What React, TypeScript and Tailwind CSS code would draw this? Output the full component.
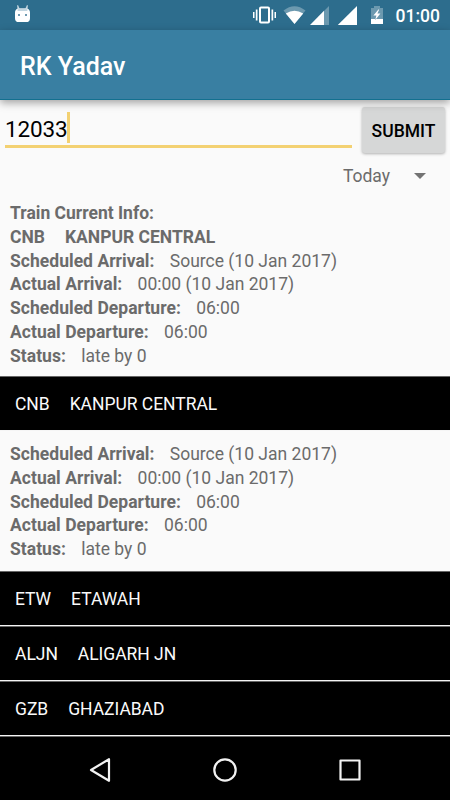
import React from "react";

type Detail = {
  label: string;
  value: string;
};

const details: Detail[] = [
  { label: "Scheduled Arrival:", value: "Source (10 Jan 2017)" },
  { label: "Actual Arrival:", value: "00:00 (10 Jan 2017)" },
  { label: "Scheduled Departure:", value: "06:00" },
  { label: "Actual Departure:", value: "06:00" },
  { label: "Status:", value: "late by 0" },
];

const stations = [
  { code: "ETW", name: "ETAWAH" },
  { code: "ALJN", name: "ALIGARH JN" },
  { code: "GZB", name: "GHAZIABAD" },
];

const StatusBar = () => (
  <div className="relative h-[30px] shrink-0 bg-[#2d6d8d] text-white">
    <svg width="450" height="30" viewBox="0 0 450 30" fill="white">
      {/* Cat head */}
      <path d="M18 5l1.6 3.4h5.8L27 5l.9.4-.5 4H17.6l-.5-4z" fill="#c3d6e0" />
      <path d="M17.5 8.8h10c1.6.5 2.5 2 2.5 4v5.4c0 2.6-1.4 3.9-4 3.9h-7c-2.6 0-4-1.3-4-3.9v-5.4c0-2 .9-3.5 2.5-4z" />
      <path d="M17.6 8.6h9.8v2.4h-9.8z" fill="#c3d6e0" />
      <path d="M18 14h2v2h-2zM25 14h2v2h-2z" fill="#6f9ab1" />
      {/* Vibrate */}
      <rect x="260" y="7.5" width="9" height="15" rx="1" fill="none" stroke="white" strokeWidth="2" />
      <path d="M255.8 9.5h1.7v11h-1.7zM253 12h1.5v6H253zM271.5 9.5h1.7v11h-1.7zM274.5 12h1.5v6h-1.5z" />
      {/* Wifi */}
      <path d="M283.5 10.5Q294.5 2 305.5 10.5L294.5 24z" opacity="0.3" />
      <path d="M285.8 13.4Q294.5 8.2 303.2 13.4L294.5 24z" />
      {/* Signals */}
      <path d="M329 6v19h-5V11z" opacity="0.3" />
      <path d="M324 10.8v14.2h-14z" />
      <path d="M357 6v19h-19.2z" />
      {/* Battery */}
      <path d="M374 6h6v2h3v11h-12V8h3z" opacity="0.3" />
      <path d="M371 19h12v5h-12zM378.4 9.5l-5 6h3l-1.2 4.5 5.2-6.4h-3l1.8-4.1z" />
    </svg>
    <span className="absolute left-[395.5px] top-[6px] text-[17.5px] leading-5 font-medium">
      01:00
    </span>
  </div>
);

const DetailLines = () => (
  <>
    {details.map((d) => (
      <div key={d.label} className="flex gap-[15.3px] whitespace-nowrap">
        <span className="font-bold tracking-[0.03px]">{d.label}</span>
        <span>{d.value}</span>
      </div>
    ))}
  </>
);

const StationRow = ({ code, name }: { code: string; name: string }) => (
  <div className="flex h-[55px] items-center gap-5 border-t border-b border-t-[#666] border-b-[#f5f5f5] bg-black pt-[2px] pl-[15px] text-[17.5px] tracking-[-0.04px] text-[#fafafa]">
    <span>{code}</span>
    <span>{name}</span>
  </div>
);

const App = () => {
  return (
    <div className="flex h-[800px] w-[450px] flex-col overflow-hidden bg-[#fafafa] font-['Roboto',sans-serif] text-[#6b6b6b]">
      <StatusBar />
      <header className="z-10 flex h-[70px] shrink-0 items-center border-b border-[#13708f] bg-[#397fa2] pl-5 pt-[5px] text-[25px] font-medium text-white shadow-[0_3px_8px_rgba(0,0,0,0.35)]">
        RK Yadav
      </header>

      {/* Search */}
      <div className="flex h-[54px] shrink-0 pl-[5px]">
        <div className="mt-[12px] flex h-[36px] w-[347px] border-b-[3px] border-[#f3d172] text-[22.5px] leading-[34px] tracking-[-0.15px] text-black">
          <span>12033</span>
          <span className="h-[31px] w-[3px] bg-[#f3d172]" />
        </div>
        <button className="mt-[7px] ml-[10px] h-[46px] w-[83px] rounded-[3px] bg-[#d6d7d7] pt-[2px] text-[17.5px] font-medium text-black shadow-[0_1px_3px_rgba(0,0,0,0.3)]">
          SUBMIT
        </button>
      </div>
      <div className="flex h-[43px] shrink-0 items-center justify-end pr-6 text-[17.5px]">
        <span className="pt-[2px]">Today</span>
        <svg className="ml-6" width="12" height="6" viewBox="0 0 12 6" fill="#737373">
          <path d="M0 0h12L6 6z" />
        </svg>
      </div>

      {/* Current position */}
      <div className="h-[179px] shrink-0 pt-[5px] pl-[10px] text-[17.5px] leading-[23.75px]">
        <div className="font-bold">Train Current Info:</div>
        <div className="flex gap-5 font-bold">
          <span>CNB</span>
          <span>KANPUR CENTRAL</span>
        </div>
        <DetailLines />
      </div>

      {/* Stations */}
      <StationRow code="CNB" name="KANPUR CENTRAL" />
      <div className="h-[140px] shrink-0 pt-[12px] pl-[10px] text-[17.5px] leading-[23.75px]">
        <DetailLines />
      </div>
      {stations.map((s) => (
        <StationRow key={s.code} code={s.code} name={s.name} />
      ))}

      {/* Navigation bar */}
      <nav className="flex flex-1 items-center justify-center border-t border-[#666] bg-black pt-[2px]">
        <svg width="274" height="26" viewBox="0 0 274 26" fill="none" stroke="#f2f2f2" strokeWidth="2.2" strokeLinejoin="round">
          <path d="M21 2.2v21.6L3 13z" />
          <circle cx="137" cy="13" r="10.7" />
          <rect x="252.5" y="3.5" width="19" height="19" />
        </svg>
      </nav>
    </div>
  );
};

export default App;
